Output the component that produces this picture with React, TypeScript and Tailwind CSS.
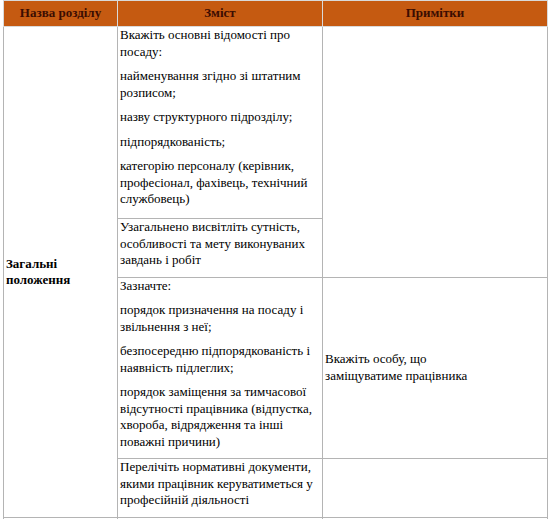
const FONT = "font-['Liberation_Serif',_'Times_New_Roman',_serif] text-[13px] leading-[16.5px]";
const HEAD = `${FONT} border border-[#d9d9d9] bg-[#c55a11] px-[5px] py-[4px] text-center font-bold text-[#3b0d02]`;
const CELL = `${FONT} border border-[#b4b4b4] px-[2px] pt-0 align-top text-black`;
const MID = `${FONT} border border-[#b4b4b4] px-[2px] align-middle text-black`;

function P({ children }: { children: React.ReactNode }) {
  return <p className={`${FONT} mb-[8px]`}>{children}</p>;
}

export default function App() {
  return (
    <div className="h-[519px] w-[550px] overflow-hidden bg-white pl-[3px]">
      <table className={`${FONT} w-[544px] table-fixed border-collapse`}>
        <colgroup>
          <col className="w-[114px]" />
          <col className="w-[205px]" />
          <col className="w-[225px]" />
        </colgroup>
        <thead>
          <tr className="h-[26px]">
            <th className={HEAD}>Назва розділу</th>
            <th className={HEAD}>Зміст</th>
            <th className={HEAD}>Примітки</th>
          </tr>
        </thead>
        <tbody>
          <tr className="h-[192px]">
            <td rowSpan={4} className={`${MID} font-bold`}>
              Загальні
              <br />
              положення
            </td>
            <td className={CELL}>
              <P>Вкажіть основні відомості про посаду:</P>
              <P>найменування згідно зі штатним розписом;</P>
              <P>назву структурного підрозділу;</P>
              <P>підпорядкованість;</P>
              <P>категорію персоналу (керівник, професіонал, фахівець, технічний службовець)</P>
            </td>
            <td rowSpan={2} className={CELL}></td>
          </tr>
          <tr className="h-[58px]">
            <td className={CELL}>
              <P>Узагальнено висвітліть сутність, особливості та мету виконуваних завдань і робіт</P>
            </td>
          </tr>
          <tr className="h-[181px]">
            <td className={CELL}>
              <P>Зазначте:</P>
              <P>порядок призначення на посаду і звільнення з неї;</P>
              <P>безпосередню підпорядкованість і наявність підлеглих;</P>
              <P>порядок заміщення за тимчасової відсутності працівника (відпустка, хвороба, відрядження та інші поважні причини)</P>
            </td>
            <td className={MID}>
              Вкажіть особу, що
              <br />
              заміщуватиме працівника
            </td>
          </tr>
          <tr className="h-[59px]">
            <td className={CELL}>
              <P>Перелічіть нормативні документи, якими працівник керуватиметься у професійній діяльності</P>
            </td>
            <td className={CELL}></td>
          </tr>
          <tr className="h-[40px]">
            <td className={CELL}></td>
            <td className={CELL}></td>
            <td className={CELL}></td>
          </tr>
        </tbody>
      </table>
    </div>
  );
}
